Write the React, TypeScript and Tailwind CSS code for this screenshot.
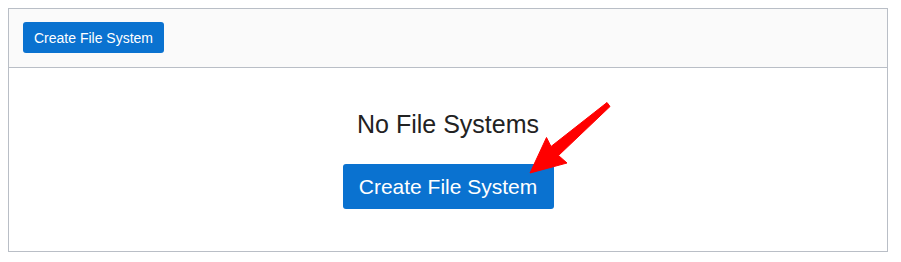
import React from 'react';

export default function App() {
  return (
    <div className="relative w-[901px] h-[262px] bg-white pt-2 px-2 font-['Liberation_Sans',Arial,sans-serif]">
      <div className="w-[880px] h-[244px] border border-[#b9bec6] bg-white flex flex-col">
        {/* Toolbar */}
        <div className="h-[59px] bg-[#fafafa] border-b border-[#b9bec6] px-[14px] pt-[13px]">
          <button className="h-[31px] px-[11px] rounded-[3px] bg-[#0a72d0] text-white text-[14px] leading-none">
            Create File System
          </button>
        </div>

        {/* Empty state */}
        <div className="flex-1 flex flex-col items-center pt-[41px]">
          <h2 className="text-[25px] leading-[30px] text-[#222] font-normal">No File Systems</h2>
          <button className="mt-[25px] h-[45px] w-[211px] rounded-[3px] bg-[#0a72d0] text-white text-[21px] leading-none">
            Create File System
          </button>
        </div>
      </div>

      {/* annotation arrow */}
      <svg className="absolute left-0 top-0 pointer-events-none" width="901" height="262" viewBox="0 0 901 262">
        <polygon
          points="607,102.5 551,146.5 546.5,137.5 530,173 567,163 558.5,155.5 610,106.5"
          fill="#ff0000"
          stroke="#ff0000"
          strokeWidth="1"
          strokeLinejoin="round"
        />
      </svg>
    </div>
  );
}
